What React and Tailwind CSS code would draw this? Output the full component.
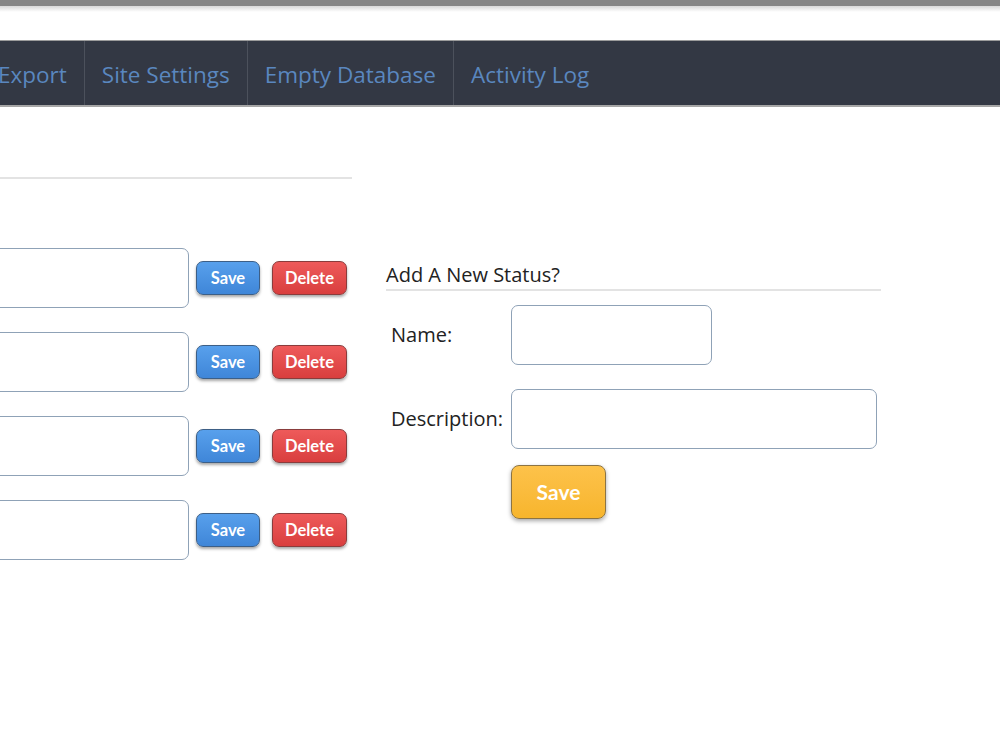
import React from "react";

const navItems = ["Export", "Site Settings", "Empty Database", "Activity Log"];

const statuses = [1, 2, 3, 4];

const SmallButton = ({ label, color }) => (
  <button
    className={
      color === "blue"
        ? "h-[34px] w-[64px] rounded-[7px] border border-[#3d5f86] bg-gradient-to-b from-[#58a0ec] to-[#3f86d8] text-[16.5px] font-bold text-white shadow-[0_2px_3px_rgba(0,0,0,0.35)]"
        : "h-[34px] w-[75px] rounded-[7px] border border-[#8a3c3c] bg-gradient-to-b from-[#ee5a5a] to-[#d93e3e] text-[16.5px] font-bold text-white shadow-[0_2px_3px_rgba(0,0,0,0.35)]"
    }
    style={{ fontFamily: "Lato, 'Liberation Sans', sans-serif" }}
  >
    {label}
  </button>
);

export default function App() {
  return (
    <div className="min-h-[750px] w-[1000px] overflow-hidden bg-white" style={{ fontFamily: "'Open Sans', 'Liberation Sans', sans-serif" }}>
      {/* browser-ish top strip */}
      <div className="h-[6px] bg-[#868686]" />
      <div className="h-[6px] bg-gradient-to-b from-[#d8d8d8] to-white" />
      <div className="h-[28px]" />

      {/* nav */}
      <nav className="flex h-[67px] items-stretch border-t border-b-2 border-t-[#9c9c9c] border-b-[#a6a6a6] bg-[#333844]">
        {navItems.map((item, i) => (
          <div
            key={item}
            className={
              (i === 0 ? "-ml-[2px] pr-[17px]" : "px-[17px]") +
              (i === navItems.length - 1 ? "" : " border-r border-[#4c515c]") +
              " flex items-center pt-[3px] text-[22.5px] text-[#5a87bf]"
            }
          >
            {item}
          </div>
        ))}
      </nav>

      <div className="flex">
        {/* existing statuses */}
        <div className="w-[352px] pt-[70px]">
          <div className="h-[2px] bg-[#e3e3e3]" />
          <div className="mt-[69px] flex flex-col gap-[24px]">
            {statuses.map((s) => (
              <div key={s} className="flex items-center">
                <input className="-ml-[61px] h-[60px] w-[250px] rounded-[7px] border border-[#8fa2b7] bg-white" />
                <div className="ml-[7px] flex gap-[12px]">
                  <SmallButton label="Save" color="blue" />
                  <SmallButton label="Delete" color="red" />
                </div>
              </div>
            ))}
          </div>
        </div>

        {/* add new */}
        <div className="ml-[34px] mt-[155px] w-[495px]">
          <div className="border-b-2 border-[#e3e3e3] pb-[1px] text-[20px] leading-[26px] text-[#222]">
            Add A New Status?
          </div>
          <div className="mt-[14px] flex items-center">
            <label className="w-[125px] pl-[5px] text-[20px] text-[#222]">Name:</label>
            <input className="h-[60px] w-[201px] rounded-[7px] border border-[#8fa2b7] bg-white" />
          </div>
          <div className="mt-[24px] flex items-center">
            <label className="w-[125px] pl-[5px] text-[20px] text-[#222]">Description:</label>
            <input className="h-[60px] w-[366px] rounded-[7px] border border-[#8fa2b7] bg-white" />
          </div>
          <div className="mt-[16px] pl-[125px]">
            <button
              className="h-[54px] w-[95px] rounded-[8px] border border-[#8c7444] bg-gradient-to-b from-[#fdc24a] to-[#f7b52c] text-[21px] font-bold text-white shadow-[0_2px_4px_rgba(0,0,0,0.35)]"
              style={{ fontFamily: "Lato, 'Liberation Sans', sans-serif" }}
            >
              Save
            </button>
          </div>
        </div>
      </div>
    </div>
  );
}
